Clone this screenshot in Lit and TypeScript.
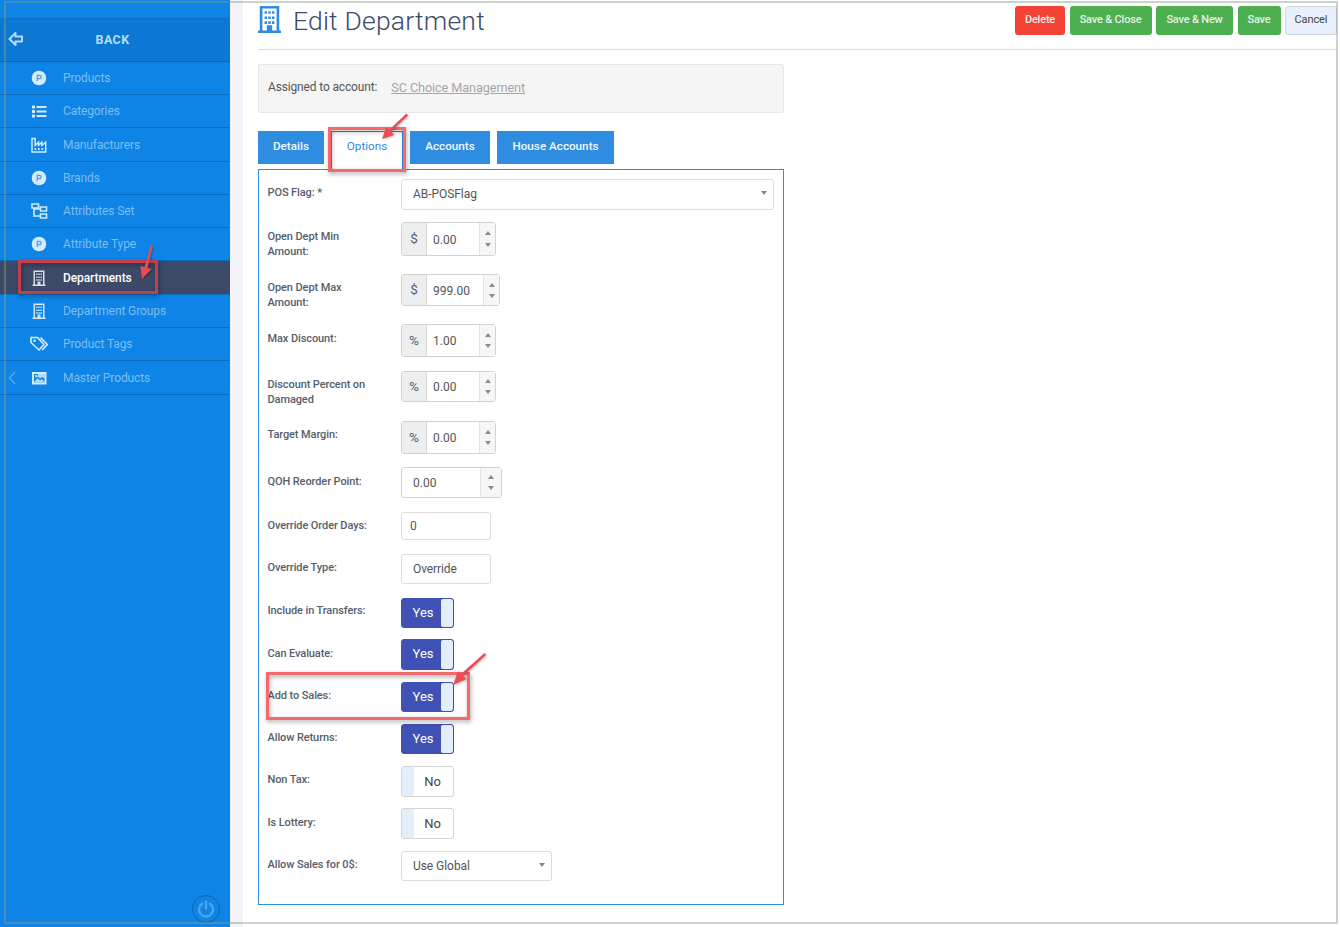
import { LitElement, html, css, svg, nothing } from "lit";
import { customElement } from "lit/decorators.js";

const pCircle = svg`<circle cx="9" cy="9" r="7.300" fill="currentColor"/><path d="M7.300 12V6.300h2.100a1.700 1.700 0 0 1 0 3.400H7.300" fill="none" stroke="#4b9fe8" stroke-width="1.300"/>`;
const list = svg`<path d="M2 3.500h3v3H2zM2 8h3v3H2zM2 12.500h3v3H2zM6.500 4h10v2h-10zM6.500 8.500h10v2h-10zM6.500 13h10v2h-10z" fill="currentColor"/>`;
const industry = svg`<path d="M2 2.500h3.200v6.800l3.300-3v3l3.300-3v3l3.900-3V16H2z" fill="none" stroke="currentColor" stroke-width="1.500"/><path d="M4.500 12h1.700v2H4.500zM8 12h1.700v2H8zM11.500 12h1.700v2h-1.700z" fill="currentColor"/>`;
const sitemap = svg`<path d="M2 2h6.500v4H2zM10.500 5h6v4h-6zM10.500 12h6v4h-6z" fill="none" stroke="currentColor" stroke-width="1.600"/><path d="M4 6v8h6.500M4 7h6.500" fill="none" stroke="currentColor" stroke-width="1.600"/>`;
const building = svg`<path fill-rule="evenodd" d="M3.500 1.500h11v14h1V17h-13v-1.500h1zM5 3v12.500h2.500v-3h3v3H13V3zM6.200 4.500h1.400V6H6.200zM8.300 4.500h1.400V6H8.300zM10.400 4.500h1.400V6h-1.400zM6.200 7.500h1.400V9H6.200zM8.300 7.500h1.400V9H8.300zM10.400 7.500h1.400V9h-1.400zM6.200 10.300h1.400v1.500H6.200zM8.300 10.300h1.400v1.500H8.300zM10.400 10.300h1.400v1.500h-1.400z" fill="currentColor"/>`;
const tags = svg`<path d="M1 2.500h6.500L14 9.500l-5 5.500-8-7.500z" fill="none" stroke="currentColor" stroke-width="1.700" stroke-linejoin="round"/><path d="M10.500 2.500 17.300 9.500l-5 5.500" fill="none" stroke="currentColor" stroke-width="1.700" stroke-linejoin="round"/><circle cx="4.500" cy="5.800" r="1.300" fill="currentColor"/>`;
const image = svg`<path fill-rule="evenodd" d="M2 3h14.500v12.500H2zM4 5v8.500h10.500V5z" fill="currentColor"/><path d="M4 13.500 7.500 9l2.500 2.500 2-1.500 2.500 3.500zM5 6h2.500v2.300H5zM8 5h6.500v4.500L12 8l-2 1.500L7.500 7H8z" fill="currentColor" opacity=".85"/>`;

const menu = [
  { label: "Products", icon: pCircle },
  { label: "Categories", icon: list },
  { label: "Manufacturers", icon: industry },
  { label: "Brands", icon: pCircle },
  { label: "Attributes Set", icon: sitemap },
  { label: "Attribute Type", icon: pCircle },
  { label: "Departments", icon: building, active: true },
  { label: "Department Groups", icon: building },
  { label: "Product Tags", icon: tags, wide: true },
  { label: "Master Products", icon: image, chevron: true },
];
const heights = [33, 33, 34, 33, 33, 33, 34, 33, 33, 34];

type Row = {
  label: string;
  step: number;
  top?: number;
  kind: "select" | "num" | "text" | "yes" | "no";
  value?: string;
  addon?: string;
  inputW?: number;
  spinW?: number;
  pad?: number;
  h?: number;
  w?: number;
};

const rows: Row[] = [
  { label: "POS Flag: *", step: 43, top: 6, kind: "select", value: "AB-POSFlag", w: 373, h: 31, pad: 2 },
  { label: "Open Dept Min Amount:", step: 52, top: 7, kind: "num", value: "0.00", addon: "$", inputW: 52, h: 34 },
  { label: "Open Dept Max Amount:", step: 50, top: 6, kind: "num", value: "999.00", addon: "$", inputW: 56, h: 32 },
  { label: "Max Discount:", step: 47, top: 7, kind: "num", value: "1.00", addon: "%", inputW: 52, h: 33 },
  { label: "Discount Percent on Damaged", step: 50, top: 6, kind: "num", value: "0.00", addon: "%", inputW: 52, h: 31 },
  { label: "Target Margin:", step: 46, top: 6, kind: "num", value: "0.00", addon: "%", inputW: 52, h: 33 },
  { label: "QOH Reorder Point:", step: 45, top: 7, kind: "num", value: "0.00", inputW: 78, spinW: 21, pad: 11, h: 31 },
  { label: "Override Order Days:", step: 42, top: 6, kind: "text", value: "0", w: 90, h: 28, pad: 8 },
  { label: "Override Type:", step: 44, top: 6, kind: "text", value: "Override", w: 90, h: 30, pad: 11 },
  { label: "Include in Transfers:", step: 41, top: 5, kind: "yes", h: 30 },
  { label: "Can Evaluate:", step: 43, top: 7, kind: "yes", h: 31 },
  { label: "Add to Sales:", step: 42, top: 6, kind: "yes", h: 30 },
  { label: "Allow Returns:", step: 42, top: 6, kind: "yes", h: 30 },
  { label: "Non Tax:", step: 42, top: 6, kind: "no", h: 31 },
  { label: "Is Lottery:", step: 43, top: 7, kind: "no", h: 31 },
  { label: "Allow Sales for 0$:", step: 54, top: 6, kind: "select", value: "Use Global", w: 151, h: 30, pad: 0 },
];

@customElement("app-root")
export class AppRoot extends LitElement {
  static styles = css`
    :host {
      display: flex;
      position: relative;
      width: 1340px;
      height: 927px;
      overflow: hidden;
      background: #fff;
      font-family: Roboto, "Liberation Sans", sans-serif;
      font-size: 12px;
      color: #555;
    }
    .sidebar {
      width: 230px;
      flex: none;
      background: #0d84e6;
      display: flex;
      flex-direction: column;
    }
    .top-gap { height: 19px; flex: none; border-bottom: 1px solid #0b6fc2; box-sizing: border-box; }
    .back {
      height: 43px;
      flex: none;
      box-sizing: border-box;
      background: #0b78d3;
      border-bottom: 1px solid #0a66b3;
      display: flex;
      align-items: center;
      color: #b5dcfb;
      font-weight: 700;
      font-size: 12.5px;
      letter-spacing: 0.4px;
      padding-bottom: 2px;
    }
    .back svg { width: 16px; height: 16px; margin-left: 8px; flex: none; }
    .back span { width: 105.5px; text-align: right; }
    .item {
      flex: none;
      box-sizing: border-box;
      border-bottom: 1px solid #0b6cbd;
      display: flex;
      align-items: center;
      color: #7fbdf3;
      font-size: 12px;
      letter-spacing: -0.1px;
    }
    .item.active { background: #3c4a68; color: #fff; font-weight: 500; }
    .slot { width: 30px; flex: none; padding-left: 8px; box-sizing: border-box; display: flex; }
    .slot svg { width: 8px; height: 14px; }
    .ico { width: 18px; height: 18px; flex: none; color: #d4eafd; margin-right: 15px; }
    .ico.wide { width: 20px; margin-left: -1px; margin-right: 14px; }
    .item.active .ico { color: #d8dce4; }
    .power {
      margin-top: auto;
      margin-right: 10px;
      margin-bottom: 4px;
      align-self: flex-end;
      width: 28px;
      height: 28px;
      box-sizing: border-box;
      border: 1px solid #0b65b0;
      border-radius: 50%;
      display: flex;
      align-items: center;
      justify-content: center;
    }
    .power svg { width: 20px; height: 20px; }
    .gutter { width: 13px; flex: none; background: #f2f2f8; }
    .main { flex: 1; padding: 0 3px 0 15px; min-width: 0; }
    .head {
      height: 50px;
      box-sizing: border-box;
      border-bottom: 1px solid #dcdcdc;
      display: flex;
      align-items: flex-start;
      padding-top: 6px;
    }
    .title-ico { width: 23px; height: 27px; color: #2e8de0; flex: none; margin-right: 12px; }
    h1 {
      margin: 0;
      font-size: 26.5px;
      line-height: 30px;
      font-weight: 300;
      color: #3b4a6b;
      letter-spacing: 0.2px;
    }
    .actions { margin-left: auto; display: flex; gap: 4.5px; }
    .btn {
      height: 29px;
      box-sizing: border-box;
      border-radius: 3px;
      color: #e6f2e6;
      font-size: 11px;
      letter-spacing: -0.2px;
      font-weight: 500;
      display: flex;
      align-items: center;
      justify-content: center;
      padding-bottom: 3px;
    }
    .danger { background: #f44336; width: 50px; }
    .ok { background: #4caf50; }
    .cancel { background: #e8f1fb; border: 1px solid #cfd6de; color: #444; font-weight: 400; width: 52px; letter-spacing: -0.1px; }
    .info {
      margin-top: 14px;
      width: 526px;
      height: 49px;
      box-sizing: border-box;
      background: #f5f5f5;
      border: 1px solid #e6e6e6;
      border-radius: 2px;
      display: flex;
      align-items: center;
      padding: 0 9px 4px;
      gap: 14px;
      color: #555;
      letter-spacing: -0.15px;
    }
    .info a { color: #a6a6a6; text-decoration: underline; font-size: 12.7px; position: relative; top: 1px; letter-spacing: -0.1px; }
    .tabs { display: flex; gap: 7px; margin-top: 18px; height: 33px; }
    .tab {
      box-sizing: border-box;
      background: #2e8de0;
      color: #f2f8fe;
      font-weight: 500;
      font-size: 11.7px;
      display: flex;
      align-items: center;
      justify-content: center;
      padding-bottom: 3px;
    }
    .tab.on { background: #fff; border: 1px solid #2e8de0; border-bottom: none; color: #2e8de0; font-weight: 400; height: 38px; padding-bottom: 9px; }
    .panel {
      margin-top: 5px;
      width: 526px;
      height: 736px;
      box-sizing: border-box;
      border: 1px solid #2e8de0;
      padding: 9px 9px 0 142px;
      position: relative;
      background: #fff;
    }
    .row { display: flex; align-items: flex-start; margin-left: -133px; }
    .label {
      width: 133px;
      flex: none;
      box-sizing: border-box;
      padding-right: 24px;
      margin-left: -0.5px;
      margin-right: 0.5px;
      font-size: 11px;
      font-weight: 500;
      letter-spacing: -0.1px;
      line-height: 15px;
      color: #565e6c;
    }
    .ctl { border: 1px solid #dcdcdc; border-radius: 3px; box-sizing: border-box; background: #fff; color: #555; }
    .select { display: flex; align-items: center; padding-left: 11px; letter-spacing: -0.05px; }
    .select i {
      margin-left: auto;
      margin-right: 6px;
      margin-bottom: 2px;
      border: 3px solid transparent;
      border-top: 4px solid #888;
      border-bottom: none;
    }
    .text { display: flex; align-items: center; letter-spacing: -0.1px; }
    .num { display: flex; align-items: stretch; width: max-content; border-color: #d2d2d2; }
    .addon {
      width: 25px;
      box-sizing: border-box;
      background: #eee;
      border-right: 1px solid #d8d8d8;
      display: flex;
      align-items: center;
      justify-content: center;
      font-size: 13.5px;
      color: #46627f;
      padding-bottom: 2px;
    }
    .val { display: flex; align-items: center; box-sizing: border-box; padding-top: 1px; }
    .spin {
      box-sizing: border-box;
      background: #f6f6f6;
      border-left: 1px solid #e2e2e2;
      display: flex;
      flex-direction: column;
      align-items: center;
      justify-content: space-around;
      padding: 4px 0;
    }
    .spin i { border: 3.5px solid transparent; display: block; }
    .spin .up { border-top: none; border-bottom: 4px solid #8a8a8a; }
    .spin .down { border-bottom: none; border-top: 4px solid #8a8a8a; }
    .toggle {
      width: 53px;
      box-sizing: border-box;
      border-radius: 3px;
      display: flex;
      font-size: 13px;
      overflow: hidden;
    }
    .toggle.yes { background: #3f51b5; border: 1px solid #3f51b5; color: #fff; }
    .toggle.no { background: #fff; border: 1px solid #d4d4d4; color: #444; }
    .toggle span { flex: 1; display: flex; align-items: center; justify-content: center; }
    .toggle.yes span { padding: 0 0 2px 3px; }
    .toggle.no span { padding: 0 2px 0 0; }
    .toggle b { width: 12px; flex: none; background: #e3eefb; border-radius: 2px; }
    .frame {
      position: absolute;
      left: 4px;
      top: 1px;
      width: 1333.5px;
      height: 923px;
      box-sizing: border-box;
      border: 2px solid rgba(130, 160, 130, 0.45);
      pointer-events: none;
    }
    .notes { position: absolute; inset: 0; width: 1340px; height: 927px; pointer-events: none; }
    .box { fill: none; stroke: #f4686e; stroke-width: 3; filter: drop-shadow(1px 2px 2px rgba(0,0,0,.35)); }
    .box.dark { stroke: #c2404c; }
    .arrow { fill: #ee4a52; filter: drop-shadow(1px 1px 1px rgba(0,0,0,.25)); }
  `;

  private control(r: Row) {
    if (r.kind === "yes")
      return html`<div class="toggle yes" style="height:${r.h}px"><span>Yes</span><b></b></div>`;
    if (r.kind === "no")
      return html`<div class="toggle no" style="height:${r.h}px"><b></b><span>No</span></div>`;
    if (r.kind === "select")
      return html`<div class="ctl select" style="width:${r.w}px;height:${r.h}px;padding-bottom:${r.pad}px">${r.value}<i></i></div>`;
    if (r.kind === "text")
      return html`<div class="ctl text" style="width:${r.w}px;height:${r.h}px;padding-left:${r.pad}px">${r.value}</div>`;
    return html`<div class="ctl num" style="height:${r.h}px">
      ${r.addon ? html`<div class="addon">${r.addon}</div>` : nothing}
      <div class="val" style="width:${r.inputW}px;padding-left:${r.pad ?? 6}px">${r.value}</div>
      <div class="spin" style="width:${r.spinW ?? 16}px"><i class="up"></i><i class="down"></i></div>
    </div>`;
  }

  render() {
    return html`
      <aside class="sidebar">
        <div class="top-gap"></div>
        <div class="back">
          <svg viewBox="0 0 16 16"><path d="M7.5 2 1.500 8l6 6v-3.500h6.500v-5H7.500z" fill="none" stroke="currentColor" stroke-width="2" stroke-linejoin="round"/></svg>
          <span>BACK</span>
        </div>
        ${menu.map(
          (m, i) => html`<div class="item ${m.active ? "active" : ""}" style="height:${heights[i]}px">
            <div class="slot">
              ${m.chevron
                ? html`<svg viewBox="0 0 8 14"><path d="M7 1 1.500 7 7 13" fill="none" stroke="#5aa9ee" stroke-width="1.400"/></svg>`
                : nothing}
            </div>
            <svg class="ico ${m.wide ? "wide" : ""}" viewBox="0 0 18 18">${m.icon}</svg>
            <span>${m.label}</span>
          </div>`
        )}
        <div class="power">
          <svg viewBox="0 0 20 20"><path d="M6 4.800a7 7 0 1 0 8 0" fill="none" stroke="#4ba4ee" stroke-width="2.400" stroke-linecap="round"/><path d="M10 2.500v7" stroke="#4ba4ee" stroke-width="2.400" stroke-linecap="round"/></svg>
        </div>
      </aside>
      <div class="gutter"></div>
      <main class="main">
        <header class="head">
          <svg class="title-ico" viewBox="2.500 1.500 13 15.500" preserveAspectRatio="none">${building}</svg>
          <h1>Edit Department</h1>
          <div class="actions">
            <div class="btn danger">Delete</div>
            <div class="btn ok" style="width:82px">Save &amp; Close</div>
            <div class="btn ok" style="width:77px">Save &amp; New</div>
            <div class="btn ok" style="width:43px">Save</div>
            <div class="btn cancel">Cancel</div>
          </div>
        </header>
        <div class="info">
          <span>Assigned to account:</span>
          <a>SC Choice Management</a>
        </div>
        <nav class="tabs">
          <div class="tab" style="width:66px">Details</div>
          <div class="tab on" style="width:72px">Options</div>
          <div class="tab" style="width:80px">Accounts</div>
          <div class="tab" style="width:117px">House Accounts</div>
        </nav>
        <section class="panel">
          ${rows.map(
            (r) => html`<div class="row" style="height:${r.step}px">
              <div class="label" style="padding-top:${r.top}px">${r.label}</div>
              ${this.control(r)}
            </div>`
          )}
        </section>
      </main>
      <div class="frame"></div>
      <svg class="notes" viewBox="0 0 1340 927">
        <rect class="box" x="329.500" y="128.500" width="75" height="42"/>
        <rect class="box dark" x="19.500" y="261.500" width="137" height="31"/>
        <rect class="box" x="267.500" y="673.500" width="201" height="45"/>
        <path class="arrow" d="M406.500 113.500 408 115.500 391 131.500 394 135 382 139 386 127.500 389 130z"/>
        <path class="arrow" d="M151 245 153 245.500 147.500 268 151.500 269 142 279 140.500 266 144.500 267z"/>
        <path class="arrow" d="M484.500 653 486 655 463 676 466.500 679 453 685 458 671.500 461 674z"/>
      </svg>
    `;
  }
}
